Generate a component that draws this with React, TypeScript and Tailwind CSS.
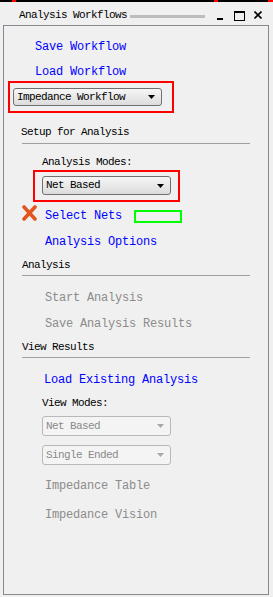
const mono = { fontFamily: '"Liberation Mono", "DejaVu Sans Mono", monospace' }

function Arrow({ disabled }: { disabled?: boolean }) {
  return (
    <svg width="7" height="4" viewBox="0 0 7 4" className="shrink-0">
      <polygon points="0,0 7,0 3.5,4" fill={disabled ? "#a8a8a8" : "#000"} />
    </svg>
  )
}

function Select({ label, width, disabled }: { label: string; width: string; disabled?: boolean }) {
  return (
    <div
      className={
        disabled
          ? `${width} flex items-center justify-between rounded-[3px] border border-[#b8b8b8] bg-[#f4f4f4] pl-[3px] pr-[6px] text-[11px] tracking-[-0.6px] text-[#8a8a8a]`
          : `${width} flex items-center justify-between rounded-[3px] border border-[#707070] bg-gradient-to-b from-[#f6f6f6] to-[#dcdcdc] pl-[3px] pr-[6px] text-[11px] tracking-[-0.6px] text-black`
      }
    >
      <span className="leading-none">{label}</span>
      <Arrow disabled={disabled} />
    </div>
  )
}

function Sep() {
  return <div className="ml-[18px] h-px w-[228px] bg-[#a0a0a0]" />
}

export default function App() {
  return (
    <div className="h-[597px] w-[273px] overflow-hidden bg-[#f0f0f0]" style={mono}>
      {/* top strip */}
      <div className="flex h-[2px] w-full bg-black">
        <div className="ml-[12px] h-full w-[4px] bg-[#ff0000]" />
        <div className="ml-[198px] h-full w-[4px] bg-[#ff0000]" />
        <div className="ml-[50px] h-full w-[5px] bg-[#ff0000]" />
      </div>

      {/* title bar */}
      <div className="flex h-[23px] items-center pt-[4px]">
        <span className="ml-[19px] text-[11px] leading-none tracking-[-0.6px] text-black">Analysis Workflows</span>
        <div className="ml-[3px] mt-[2px] h-[3px] w-[75px] bg-[#bdbdbd]" />
        <div className="ml-[12px] mt-[7px] h-[2px] w-[6px] bg-black" />
        <div className="ml-[11px] h-[10px] w-[11px] border border-t-2 border-black border-b-dotted border-r-dotted" />
        <svg width="8" height="8" viewBox="0 0 8 8" className="ml-[9px] mb-[2px]">
          <path d="M0.5 0.5 L7.5 7.5 M7.5 0.5 L0.5 7.5" stroke="#000" strokeWidth="1.6" />
        </svg>
      </div>

      {/* panel */}
      <div className="ml-[3px] flex h-[570px] w-[266px] flex-col border border-[#868a8e] bg-[#f0f0f0] pt-[8px] text-[12px] tracking-[-0.2px]">
        <div className="flex h-[25px] items-center pl-[31px] leading-none text-[#0000ff]">Save Workflow</div>
        <div className="flex h-[22px] items-center pl-[31px] pt-[3px] leading-none text-[#0000ff]">Load Workflow</div>

        <div className="ml-[4px] h-[32px] w-[166px] border-2 border-[#ff0000] pl-[3px] pt-[5px]">
          <div className="flex h-[18px]">
            <Select label="Impedance Workflow" width="w-[149px]" />
          </div>
        </div>

        <div className="mt-[6px] flex h-[24px] items-center pl-[17px] pt-[2px] text-[11px] leading-none tracking-[-0.6px] text-black">
          Setup for Analysis
        </div>
        <Sep />

        <div className="mt-[8px] flex h-[18px] items-center pl-[38px] pt-[2px] text-[11px] leading-none tracking-[-0.6px] text-black">
          Analysis Modes:
        </div>
        <div className="ml-[29px] h-[32px] w-[147px] border-2 border-[#ff0000] pl-[7px] pt-[4px]">
          <div className="flex h-[19px]">
            <Select label="Net Based" width="w-[129px]" />
          </div>
        </div>

        <div className="mt-[3px] flex h-[19px] items-center pl-[18px]">
          <svg width="15" height="16" viewBox="0 0 15 16" className="mb-[3px] shrink-0">
            <path d="M2 2 L13 14 M13 2 L2 14" stroke="#e2561d" strokeWidth="3.6" strokeLinecap="round" />
          </svg>
          <span className="ml-[8px] pt-[2px] leading-none text-[#0000ff]">Select Nets</span>
          <div className="ml-[12px] mt-[3px] h-[13px] w-[48px] border-2 border-[#00ff00]" />
        </div>
        <div className="mt-[7px] flex h-[20px] items-center pl-[41px] pt-[2px] leading-none text-[#0000ff]">Analysis Options</div>

        <div className="mt-[2px] flex h-[22px] items-center pl-[18px] pt-[2px] text-[11px] leading-none tracking-[-0.6px] text-black">
          Analysis
        </div>
        <Sep />

        <div className="mt-[8px] flex h-[26px] items-center pl-[41px] pt-[2px] leading-none text-[#8c8c8c]">Start Analysis</div>
        <div className="flex h-[25px] items-center pl-[41px] pt-[2px] leading-none text-[#8c8c8c]">Save Analysis Results</div>
        <div className="flex h-[22px] items-center pl-[18px] pt-[2px] text-[11px] leading-none tracking-[-0.6px] text-black">
          View Results
        </div>
        <Sep />

        <div className="mt-[10px] flex h-[22px] items-center pl-[40px] pt-[2px] leading-none text-[#0000ff]">
          Load Existing Analysis
        </div>
        <div className="flex h-[24px] items-center pl-[38px] pt-[2px] text-[11px] leading-none tracking-[-0.6px] text-black">
          View Modes:
        </div>
        <div className="mt-[2px] flex h-[20px] pl-[38px]">
          <Select label="Net Based" width="w-[129px]" disabled />
        </div>
        <div className="mt-[9px] flex h-[20px] pl-[38px]">
          <Select label="Single Ended" width="w-[129px]" disabled />
        </div>

        <div className="mt-[7px] flex h-[26px] items-center pl-[41px] pt-[2px] leading-none text-[#8c8c8c]">Impedance Table</div>
        <div className="mt-[3px] flex h-[26px] items-center pl-[41px] pt-[2px] leading-none text-[#8c8c8c]">Impedance Vision</div>
      </div>
    </div>
  )
}
